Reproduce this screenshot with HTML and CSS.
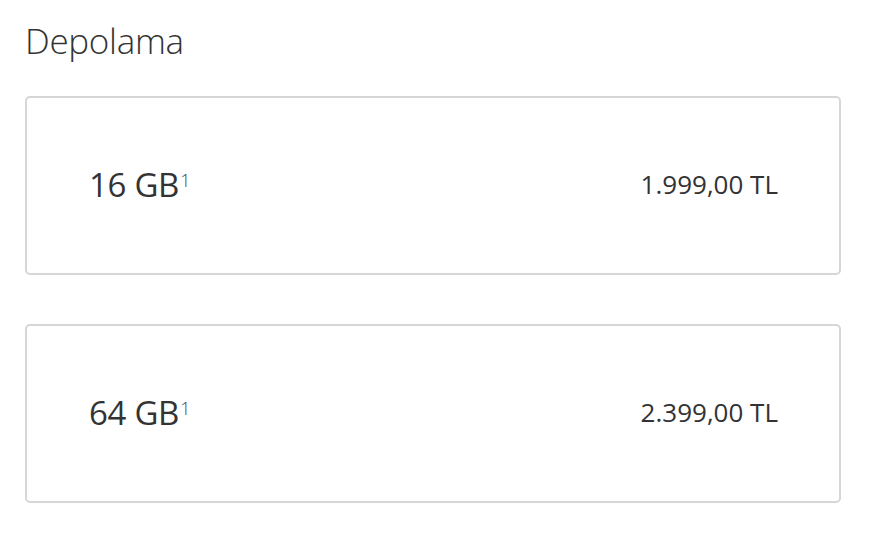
FILE: index.html
```html
<!DOCTYPE html>
<html lang="tr">
<head>
<meta charset="utf-8">
<link rel="stylesheet" href="styles.css">
</head>
<body>
<div class="page">
  <h2 class="title">Depolama</h2>
  <div class="options">
    <div class="card">
      <span class="cap">16 GB<sup>1</sup></span>
      <span class="price">1.999,00 TL</span>
    </div>
    <div class="card">
      <span class="cap">64 GB<sup>1</sup></span>
      <span class="price">2.399,00 TL</span>
    </div>
  </div>
</div>
</body>
</html>
```
FILE: styles.css
```css
html, body { margin: 0; padding: 0; background: #fff; }
body { font-family: "Open Sans", "Noto Sans", sans-serif; color: #333; }
.page { padding: 0 33px 0 25px; }
.title {
  margin: 0;
  padding-top: 17px;
  font-size: 35px;
  font-weight: 300;
  line-height: 48px;
  color: #333;
  letter-spacing: -0.3px;
}
.options { display: flex; flex-direction: column; gap: 49px; margin-top: 31px; }
.card {
  height: 175px;
  border: 2px solid #d6d6d6;
  border-radius: 5px;
  display: flex;
  align-items: center;
  justify-content: space-between;
  padding: 0 61px 0 62px;
}
.cap { font-size: 33px; font-weight: 400; letter-spacing: -0.3px; margin-top: -3px; }
.cap sup { font-size: 18px; font-weight: 300; color: #444; vertical-align: 0.55em; margin-left: 1px; }
.price { font-size: 26px; font-weight: 400; letter-spacing: 0; margin-top: -4px; }
```
